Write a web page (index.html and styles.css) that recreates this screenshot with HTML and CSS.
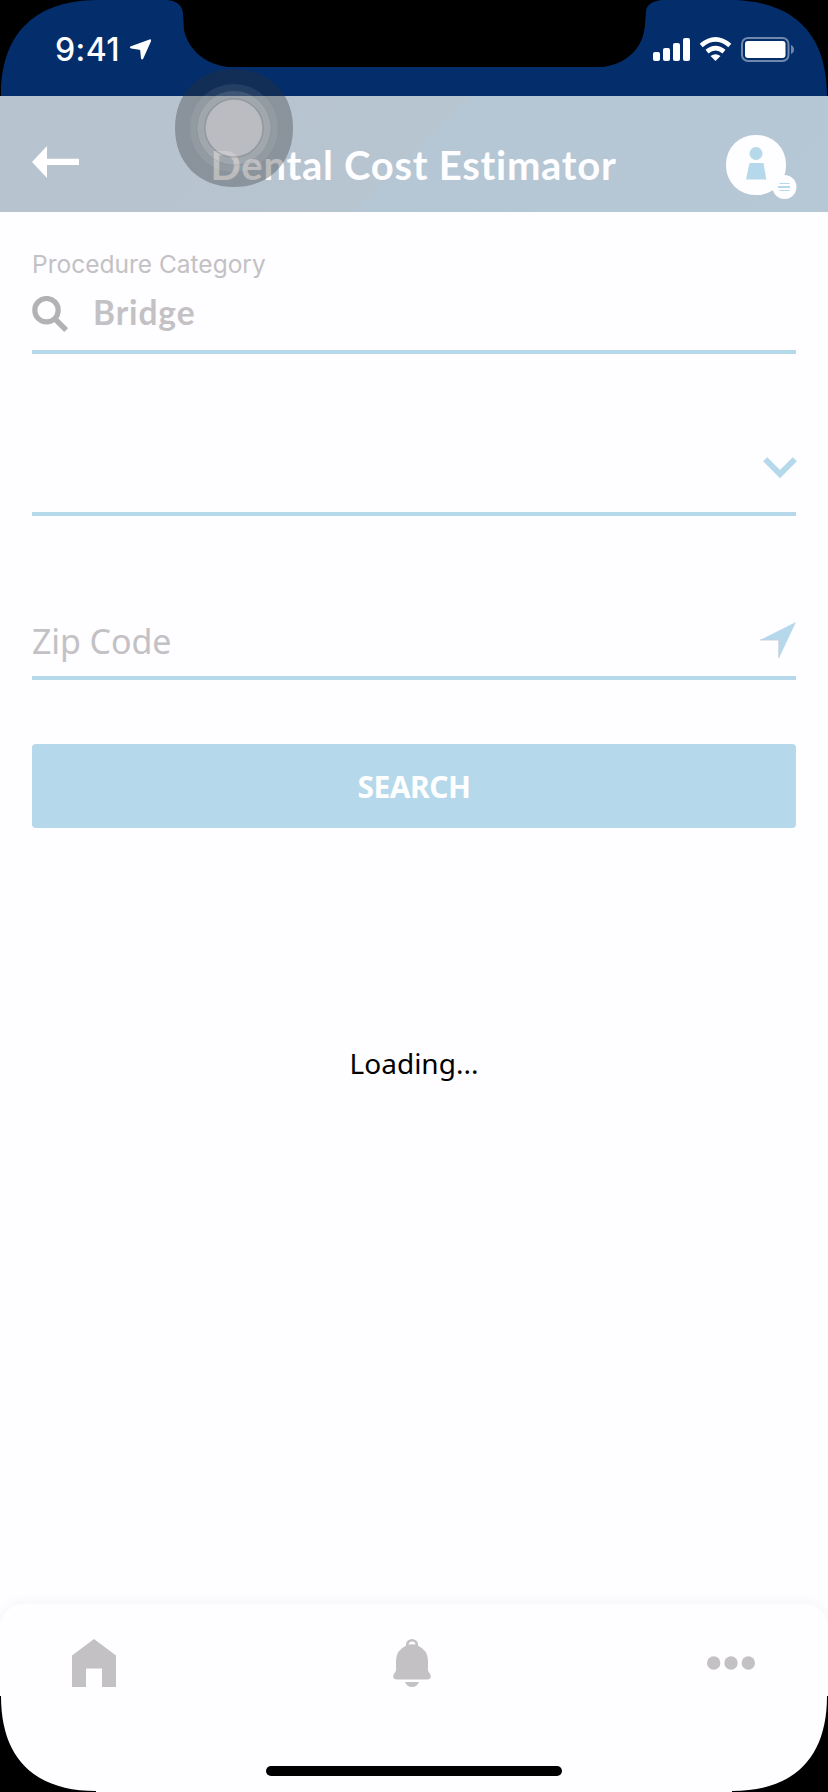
FILE: index.html
```html
<!DOCTYPE html>
<html lang="en">
<head>
<meta charset="utf-8">
<title>Dental Cost Estimator</title>
<link rel="stylesheet" href="styles.css">
</head>
<body>
<div class="screen">
  <div class="status-bar">
    <svg class="status-shape" viewBox="0 0 828 96" width="828" height="96">
      <path fill="#032e6b" d="M1 96C1 36 32 1 96 0H167C177 1 182 5 183 13L184 30C188 48 203 64 228 67H603C625 64 643 50 645 25L646 11C647 4 653 1 662 0H732C796 1 827 36 827 96Z"/>
    </svg>
    <div class="status-left">
      <span class="time">9:41</span>
      <svg class="location" width="23" height="22" viewBox="0 0 23 22"><path fill="#fff" d="M1.3 7.5 20.5.4Q22.700 0 22 2.200L14.300 19.600Q13 21.500 12 19.500L11.200 11.300Q11 10.800 10.400 10.700L2 9.500Q0 8.600 1.300 7.500Z"/></svg>
    </div>
    <div class="status-right">
      <svg width="142" height="26" viewBox="0 0 142 26">
        <g fill="#fff"><rect x="0" y="15" width="7" height="9" rx="2"/><rect x="10" y="11" width="7" height="13" rx="2"/><rect x="20" y="6" width="7" height="18" rx="2"/><rect x="30" y="1" width="7" height="23" rx="2"/></g>
        <g fill="none" stroke="#fff" stroke-width="4.600"><path d="M48.200 8.500Q62.500-3.700 76.800 8.500"/><path d="M54 14.600Q62.500 7.600 71 14.600"/></g>
        <path fill="#fff" d="M57.500 19Q62.500 15.300 67.500 19L62.500 24Z"/>
        <rect x="89" y="1" width="46.500" height="23" rx="6" fill="none" stroke="#7188ad" stroke-width="2"/>
        <rect x="92" y="4" width="40.500" height="17" rx="3" fill="#fff"/>
        <path fill="#7188ad" d="M138 8Q141 9.500 141 12.500 141 15.500 138 17Z"/>
      </svg>
    </div>
  </div>

  <header class="header">
    <svg class="back" width="48" height="32" viewBox="0 0 48 32"><path fill="#fff" d="M0 16 15 0V12.800H47V19H15V32Z"/></svg>
    <h1 class="title">Dental Cost Estimator</h1>
    <svg class="profile" width="71" height="66" viewBox="0 0 71 66">
      <rect x="0" y="1" width="60" height="60" rx="29" fill="#fefdff"/>
      <circle cx="58.500" cy="53" r="12" fill="#fefdff"/>
      <circle cx="30" cy="19.500" r="6.500" fill="#b5d9eb"/>
      <path fill="#b5d9eb" d="M23.500 29H37.500L40.300 45.500H20Z"/>
      <path d="M53.500 49.500H63.500M53.500 56.500H63.500" stroke="#b5d9eb" stroke-width="1.200"/>
      <path d="M52 53H64" stroke="#b5d9eb" stroke-width="2"/>
    </svg>
  </header>

  <main class="form">
    <section class="field category">
      <div class="label">Procedure Category</div>
      <div class="search-value">
        <svg width="37" height="37" viewBox="0 0 37 37"><circle cx="14.500" cy="14.200" r="11.700" fill="none" stroke="#b2b1b4" stroke-width="5.200"/><path d="m22.500 22.500 11.700 11.700" stroke="#b2b1b4" stroke-width="5.400"/></svg>
        <span class="value">Bridge</span>
      </div>
    </section>
    <section class="field select">
      <svg width="34" height="22" viewBox="0 0 34 22"><path d="m2.200 2.300 14.800 14.800L31.800 2.300" fill="none" stroke="#b5d9eb" stroke-width="5.800"/></svg>
    </section>
    <section class="field zip">
      <span class="placeholder">Zip Code</span>
      <svg width="36" height="37" viewBox="0 0 36 37"><path fill="#b5d9eb" d="M36 0 18.800 36.500V18H0Z"/><path d="M0 18H18.800V36" fill="none" stroke="#c4cbd1" stroke-width=".8"/></svg>
    </section>
    <button class="search-button">SEARCH</button>
    <div class="loading">Loading...</div>
  </main>

  <nav class="tabs">
    <svg class="home" width="44" height="48" viewBox="0 0 44 48"><path fill="#c3c1c4" d="M22 0 44 16.500V48H30V29.500H14V48H0V16.500Z"/></svg>
    <svg class="bell" width="38" height="48" viewBox="0 0 38 48">
      <path d="M14.300 7V5.500a4.700 4.200 0 0 1 9.400 0V7" fill="none" stroke="#c3c1c4" stroke-width="2.600"/>
      <path fill="#c3c1c4" d="M13.500 6.500Q19 4 24.500 6.500Q35 11 35 22V31Q35 32.500 37 35Q39.500 40 34.500 40.500H3.500Q-1.500 40 1 35Q3 32.500 3 31V22Q3 11 13.500 6.500ZM12 43H26Q24 48 19 48T12 43Z"/>
    </svg>
    <svg class="more" width="48" height="14" viewBox="0 0 48 14"><g fill="#c3c1c4"><circle cx="6.700" cy="7" r="6.700"/><circle cx="24" cy="7" r="6.700"/><circle cx="41.300" cy="7" r="6.700"/></g></svg>
  </nav>

  <svg class="touch" width="120" height="120" viewBox="0 0 120 120">
    <path d="M60 1C95 1 119 25 119 60S95 119 60 119 1 95 1 60 25 1 60 1Z" fill="#303030" fill-opacity=".33"/>
    <circle cx="60" cy="60" r="44" fill="#fff" fill-opacity=".08"/>
    <circle cx="60" cy="60" r="37" fill="#fff" fill-opacity=".12" stroke="#586873" stroke-opacity=".15"/>
    <circle cx="60" cy="60" r="29" fill="#d0ccd2" fill-opacity=".57" stroke="#586873" stroke-opacity=".3" stroke-width="1.500"/>
  </svg>
  <svg class="corners" width="828" height="96" viewBox="0 0 828 96"><path d="M0 0H1C1 60 32 95 96 95V96H0ZM828 0H827C827 60 796 95 732 95V96H828Z"/></svg>
  <div class="home-indicator"></div>
</div>
</body>
</html>
```
FILE: styles.css
```css
* { box-sizing: border-box; }
body { margin: 0; background: #fefdff; }
svg { display: block; flex-shrink: 0; }
.screen {
  position: relative;
  display: flex;
  flex-direction: column;
  width: 828px;
  height: 1792px;
  overflow: hidden;
  background: #fefdff;
}
.status-bar {
  position: relative;
  display: flex;
  justify-content: space-between;
  height: 96px;
  background: #000;
}
.status-shape { position: absolute; left: 0; top: 0; }
.status-left {
  position: relative;
  display: flex;
  gap: 10px;
  padding: 31px 0 0 55px;
}
.time {
  width: 64px;
  font: 500 32px/38px Inter, sans-serif;
  letter-spacing: 0.4px;
  color: #fff;
}
.location { margin-top: 8px; }
.status-right { position: relative; padding: 37px 33px 0 0; }
.header {
  display: flex;
  justify-content: space-between;
  height: 116px;
  padding: 0 31px 0 32px;
  background: linear-gradient(135deg, #b7c3cf 0, #b7c5d1 49.8%, #b5c7d4 50%, #b6c8d5 100%);
}
.back { margin-top: 50px; }
.title {
  width: 412px;
  margin: 46px 0 0 27px;
  font: 700 40px/46px Lato, sans-serif;
  letter-spacing: 0.7px;
  white-space: nowrap;
  color: #fefdff;
}
.profile { margin-top: 38px; }
.form {
  display: flex;
  flex-direction: column;
  flex: 1;
  padding: 0 32px;
}
.field { border-bottom: 4px solid #b5d9eb; }
.category { height: 142px; padding-top: 36px; }
.label {
  font: 400 24.5px/32px Inter, sans-serif;
  letter-spacing: 0;
  color: #c3c1c4;
}
.search-value {
  display: flex;
  gap: 24px;
  align-items: flex-start;
  margin-top: 16px;
}
.value {
  margin-top: -4px;
  font: 700 33.5px/40px Lato, sans-serif;
  letter-spacing: 0.9px;
  color: #c3c1c4;
}
.select {
  display: flex;
  justify-content: flex-end;
  height: 162px;
  padding-top: 103px;
}
.select svg { margin-right: -1px; }
.zip {
  display: flex;
  justify-content: space-between;
  height: 164px;
  padding-top: 106px;
}
.placeholder {
  margin-top: -4px;
  font: 400 34px/46px "Noto Sans", sans-serif;
  letter-spacing: -0.1px;
  color: #c3c1c4;
}
.search-button {
  height: 84px;
  margin-top: 64px;
  padding: 1px 0 0;
  border: 0;
  border-radius: 4px;
  background: #b5d9eb;
  color: #fff;
  font: 700 30px/40px "Noto Sans", sans-serif;
  letter-spacing: -0.5px;
}
.loading {
  margin-top: 215px;
  text-align: center;
  font: 400 28px/40px "Noto Sans", sans-serif;
  color: #000;
}
.tabs {
  display: flex;
  justify-content: space-between;
  height: 188px;
  padding: 35px 73px 0 72px;
  border-radius: 24px 24px 0 0;
  background: #fefdff;
  box-shadow: 0 -3px 12px rgba(60, 60, 70, 0.04);
}
.more { margin-top: 17px; }
.touch { position: absolute; left: 174px; top: 68px; }
.corners { position: absolute; left: 0; bottom: 0; }
.home-indicator {
  position: absolute;
  left: 266px;
  bottom: 16px;
  width: 296px;
  height: 10px;
  border-radius: 5px;
  background: #000;
}
```
